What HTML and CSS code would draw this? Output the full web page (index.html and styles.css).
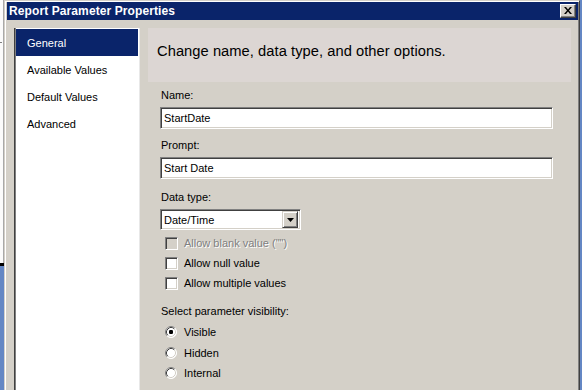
FILE: index.html
```html
<!DOCTYPE html>
<html>
<head>
<meta charset="utf-8">
<link rel="stylesheet" href="styles.css">
</head>
<body>
<div class="screen">
  <div class="behind-left">
    <div class="bl-top"><div class="bl-dash"></div></div>
    <div class="bl-line"></div>
    <div class="bl-blue"></div>
  </div>
  <div class="dialog">
    <div class="titlebar">
      <span class="title">Report Parameter Properties</span>
      <span class="close"><svg width="8" height="7" viewBox="0 0 8 7"><path d="M0 0h2l2 2.5L6 0h2L5 3.5 8 7H6L4 4.5 2 7H0l3-3.5z" fill="#000"/></svg></span>
    </div>
    <div class="body">
      <nav class="nav">
        <div class="nav-item active">General</div>
        <div class="nav-item">Available Values</div>
        <div class="nav-item">Default Values</div>
        <div class="nav-item">Advanced</div>
      </nav>
      <main class="content">
        <div class="header">Change name, data type, and other options.</div>
        <div class="form">
          <div class="field">
            <div class="label">Name:</div>
            <div class="textbox">StartDate</div>
          </div>
          <div class="field field-prompt">
            <div class="label">Prompt:</div>
            <div class="textbox">Start Date</div>
          </div>
          <div class="field">
            <div class="label">Data type:</div>
            <div class="select">
              <span class="select-value">Date/Time</span>
              <span class="select-btn"><svg width="7" height="4" viewBox="0 0 7 4"><path d="M0 0h7L3.5 4z" fill="#000"/></svg></span>
            </div>
          </div>
          <div class="checks">
            <div class="check disabled"><span class="box"></span><span class="check-text">Allow blank value ("")</span></div>
            <div class="check"><span class="box"></span><span class="check-text">Allow null value</span></div>
            <div class="check"><span class="box"></span><span class="check-text">Allow multiple values</span></div>
          </div>
          <div class="label vis-label">Select parameter visibility:</div>
          <div class="radios">
            <div class="radio"><svg class="radio-svg" width="12" height="12" viewBox="0 0 12 12"><circle cx="6" cy="6" r="5.5" fill="#fff"/><path d="M2.11 9.89A5.5 5.5 0 0 1 9.89 2.11" fill="none" stroke="#808080"/><path d="M9.89 2.11A5.5 5.5 0 0 1 2.11 9.89" fill="none" stroke="#fff"/><path d="M2.82 9.18A4.5 4.5 0 0 1 9.18 2.82" fill="none" stroke="#404040"/><path d="M9.18 2.82A4.5 4.5 0 0 1 2.82 9.18" fill="none" stroke="#d4d0c8"/><rect x="4" y="4" width="4" height="4" rx="1.2" fill="#000"/></svg><span class="radio-text">Visible</span></div>
            <div class="radio"><svg class="radio-svg" width="12" height="12" viewBox="0 0 12 12"><circle cx="6" cy="6" r="5.5" fill="#fff"/><path d="M2.11 9.89A5.5 5.5 0 0 1 9.89 2.11" fill="none" stroke="#808080"/><path d="M9.89 2.11A5.5 5.5 0 0 1 2.11 9.89" fill="none" stroke="#fff"/><path d="M2.82 9.18A4.5 4.5 0 0 1 9.18 2.82" fill="none" stroke="#404040"/><path d="M9.18 2.82A4.5 4.5 0 0 1 2.82 9.18" fill="none" stroke="#d4d0c8"/></svg><span class="radio-text">Hidden</span></div>
            <div class="radio"><svg class="radio-svg" width="12" height="12" viewBox="0 0 12 12"><circle cx="6" cy="6" r="5.5" fill="#fff"/><path d="M2.11 9.89A5.5 5.5 0 0 1 9.89 2.11" fill="none" stroke="#808080"/><path d="M9.89 2.11A5.5 5.5 0 0 1 2.11 9.89" fill="none" stroke="#fff"/><path d="M2.82 9.18A4.5 4.5 0 0 1 9.18 2.82" fill="none" stroke="#404040"/><path d="M9.18 2.82A4.5 4.5 0 0 1 2.82 9.18" fill="none" stroke="#d4d0c8"/></svg><span class="radio-text">Internal</span></div>
          </div>
        </div>
      </main>
    </div>
  </div>
  <div class="behind-right"></div>
</div>
</body>
</html>
```
FILE: styles.css
```css
* { box-sizing: border-box; }
html, body { margin: 0; padding: 0; }
body {
  width: 582px;
  height: 390px;
  overflow: hidden;
  font-family: "Liberation Sans", Arial, sans-serif;
  font-size: 11px;
  color: #000;
}
.screen {
  display: flex;
  width: 582px;
  height: 390px;
}
.behind-left {
  width: 4px;
  display: flex;
  flex-direction: column;
}
.bl-top {
  height: 263px;
  background: #fbfbfb;
  border-right: 1px solid #a8a8a8;
  padding-top: 42px;
}
.bl-dash {
  height: 1px;
  background: repeating-linear-gradient(90deg, #808080 0 2px, transparent 2px 3px);
}
.bl-line { height: 3px; background: #000; }
.bl-blue { flex: 1; background: #6487c4; }
.behind-right { width: 2px; background: #6487c4; }

.dialog {
  width: 576px;
  display: flex;
  flex-direction: column;
  background: #d4d0c8;
  border-left: 1px solid #d4d0c8;
  border-top: 1px solid #d4d0c8;
  border-right: 1px solid #404040;
  box-shadow: inset 1px 1px #fff, inset -1px 0 #808080;
  padding: 1px 1px 0 2px;
}
.titlebar {
  height: 18px;
  background: #0a246a;
  display: flex;
  align-items: center;
  justify-content: space-between;
  padding: 0 2px 0 2px;
}
.title {
  color: #fff;
  font-weight: bold;
  font-size: 12px;
  letter-spacing: 0.1px;
}
.close {
  width: 16px;
  height: 14px;
  background: #d4d0c8;
  border: 1px solid;
  border-color: #fff #404040 #404040 #fff;
  box-shadow: inset -1px -1px #808080;
  display: flex;
  align-items: center;
  justify-content: center;
  padding-bottom: 1px;
}
.close svg { display: block; }

.body {
  flex: 1;
  display: flex;
  padding: 8px 0 0 7px;
  gap: 8px;
}
.nav {
  width: 126px;
  background: #fff;
  border-left: 1px solid #404040;
  border-right: 1px solid #e8e8e8;
  box-shadow: inset 1px 0 #808080;
  padding: 1px 1px 0 1px;
  display: flex;
  flex-direction: column;
}
.nav-item {
  height: 27px;
  display: flex;
  align-items: center;
  padding-left: 11px;
  font-size: 11px;
}
.nav-item.active {
  background: #0a246a;
  color: #fff;
}

.content {
  flex: 1;
  display: flex;
  flex-direction: column;
}
.header {
  height: 54px;
  margin-right: 7px;
  background: #dcd6d3;
  padding: 14px 0 0 9px;
  font-size: 14.7px;
  letter-spacing: 0.05px;
  line-height: 18px;
}
.form {
  padding: 6px 0 0 12px;
  display: flex;
  flex-direction: column;
}
.field {
  display: flex;
  flex-direction: column;
  margin-bottom: 9px;
}
.field-prompt { margin-bottom: 11px; }
.label {
  height: 14px;
  line-height: 14px;
  padding-left: 1px;
  margin-bottom: 5px;
}
.field-prompt .label { margin-bottom: 5px; }
.textbox {
  width: 393px;
  height: 22px;
  background: #fff;
  border: 1px solid;
  border-color: #808080 #fff #fff #808080;
  box-shadow: inset 1px 1px #404040, inset -1px -1px #d4d0c8;
  padding: 0 0 0 3px;
  line-height: 20px;
  font-size: 11px;
}
.select {
  width: 141px;
  height: 21px;
  background: #fff;
  border: 1px solid;
  border-color: #808080 #fff #fff #808080;
  box-shadow: inset 1px 1px #404040, inset -1px -1px #d4d0c8;
  padding: 2px 2px 2px 3px;
  display: flex;
  align-items: center;
  justify-content: space-between;
}
.select-btn {
  width: 16px;
  height: 17px;
  background: #d4d0c8;
  border: 1px solid;
  border-color: #d4d0c8 #404040 #404040 #d4d0c8;
  box-shadow: inset 1px 1px #fff, inset -1px -1px #808080;
  display: flex;
  align-items: center;
  justify-content: center;
}
.select-btn svg { display: block; }
.checks {
  display: flex;
  flex-direction: column;
  margin-top: -6px;
}
.check {
  height: 20px;
  display: flex;
  align-items: center;
  padding-left: 5px;
  gap: 6px;
}
.box {
  width: 13px;
  height: 13px;
  background: #fff;
  border: 1px solid;
  border-color: #808080 #fff #fff #808080;
  box-shadow: inset 1px 1px #404040, inset -1px -1px #d4d0c8;
}
.check.disabled .box { background: #d4d0c8; }
.check.disabled .check-text {
  color: #808080;
  text-shadow: 1px 1px #fff;
}
.vis-label {
  margin-top: 11px;
  margin-bottom: 4px;
}
.radios {
  display: flex;
  flex-direction: column;
}
.radio {
  height: 20.5px;
  display: flex;
  align-items: center;
  padding-left: 5px;
  gap: 7px;
}
.radio-svg { display: block; }
```
